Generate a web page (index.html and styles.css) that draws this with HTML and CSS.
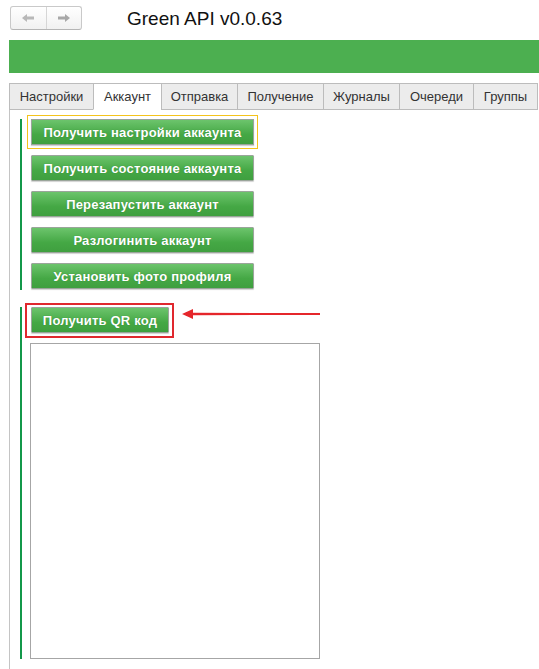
FILE: index.html
```html
<!DOCTYPE html>
<html lang="ru">
<head>
<meta charset="utf-8">
<title>Green API</title>
<link rel="stylesheet" href="styles.css">
</head>
<body>
<div class="top">
  <div class="nav">
    <span class="nav-btn">
      <svg width="14" height="10" viewBox="0 0 14 10"><path d="M1 5 L6 1 L6 3.5 L13 3.5 L13 6.5 L6 6.5 L6 9 Z" fill="#b8b8b8"/></svg>
    </span>
    <span class="nav-btn">
      <svg width="14" height="10" viewBox="0 0 14 10"><path d="M13 5 L8 1 L8 3.5 L1 3.5 L1 6.5 L8 6.5 L8 9 Z" fill="#a8a8a8"/></svg>
    </span>
  </div>
  <div class="title">Green API v0.0.63</div>
</div>
<div class="banner"></div>
<div class="tabs">
  <div class="tab t1">Настройки</div>
  <div class="tab t2 active">Аккаунт</div>
  <div class="tab t3">Отправка</div>
  <div class="tab t4">Получение</div>
  <div class="tab t5">Журналы</div>
  <div class="tab t6">Очереди</div>
  <div class="tab t7">Группы</div>
</div>
<div class="panel">
  <div class="group g1">
    <button class="btn focused">Получить настройки аккаунта</button>
    <button class="btn">Получить состояние аккаунта</button>
    <button class="btn">Перезапустить аккаунт</button>
    <button class="btn">Разлогинить аккаунт</button>
    <button class="btn">Установить фото профиля</button>
  </div>
  <div class="group g2">
    <div class="qr-row">
      <button class="btn qr">Получить QR код</button>
      <div class="mark"></div>
      <svg class="arrow" width="140" height="12" viewBox="0 0 140 12">
        <path d="M0 6 L11 1 L11 4.8 L138 5 L138 7 L11 7.2 L11 11 Z" fill="#e5262b"/>
      </svg>
    </div>
    <div class="qr-box"></div>
  </div>
</div>
</body>
</html>
```

FILE: styles.css
```css
html, body {
  margin: 0;
  padding: 0;
  background: #fff;
  font-family: "Liberation Sans", Arial, sans-serif;
  color: #333;
}

.top {
  display: flex;
  align-items: flex-start;
  padding-top: 6px;
  height: 34px;
  box-sizing: border-box;
}

.nav {
  margin-left: 10px;
  width: 72px;
  height: 24px;
  box-sizing: border-box;
  border: 1px solid #c9c9c9;
  border-bottom-color: #b5b5b5;
  border-radius: 3px;
  background: linear-gradient(#ffffff, #f1f1f1);
  display: flex;
}

.nav-btn {
  flex: 1;
  display: flex;
  align-items: center;
  justify-content: center;
}

.nav-btn + .nav-btn {
  border-left: 1px solid #d6d6d6;
}

.title {
  margin-left: 45px;
  font-size: 19px;
  line-height: 24px;
  margin-top: 1px;
  color: #111;
}

.banner {
  margin-left: 9px;
  margin-top: 6px;
  height: 33px;
  background: #4caf50;
}

.tabs {
  display: flex;
  margin-left: 9px;
  margin-top: 10px;
  height: 27px;
}

.tab {
  box-sizing: border-box;
  height: 27px;
  border: 1px solid #bcbcbc;
  border-right: none;
  background: #ececec;
  font-size: 13px;
  line-height: 25px;
  text-align: center;
  color: #333;
}

.tab.t7 { border-right: 1px solid #bcbcbc; }
.tab.active { background: #fff; border-bottom-color: #fff; }
.t1 { width: 84px; }
.t2 { width: 68px; }
.t3 { width: 76px; }
.t4 { width: 86px; }
.t5 { width: 76px; }
.t6 { width: 74px; }
.t7 { width: 65px; }

.panel {
  margin-left: 9px;
  border-left: 1px solid #c4c4c4;
  height: 559px;
  padding-top: 9px;
  box-sizing: border-box;
}

.group {
  margin-left: 10px;
  border-left: 2px solid #13984a;
}

.g1 {
  display: flex;
  flex-direction: column;
  align-items: flex-start;
  gap: 10px;
  padding-left: 9px;
  padding-bottom: 1px;
}

.btn {
  box-sizing: border-box;
  width: 223px;
  height: 26px;
  padding: 0;
  border: 1px solid #9aa59a;
  border-radius: 1px;
  background: linear-gradient(#6cc46c, #45a845 60%, #3f9f3f);
  box-shadow: 0 1px 1px rgba(0, 0, 0, 0.18);
  color: #fff;
  font-family: "Liberation Sans", Arial, sans-serif;
  font-weight: bold;
  font-size: 13px;
  letter-spacing: 0.2px;
  text-shadow: 0 0 1px rgba(0, 60, 0, 0.35);
  cursor: pointer;
}

.btn.focused {
  outline: 1px solid #f4c31c;
  outline-offset: 3px;
  border-radius: 0;
}

.g2 {
  margin-top: 17px;
  padding-top: 0;
  height: 352px;
  box-sizing: border-box;
}

.qr-row {
  position: relative;
  padding-left: 9px;
  height: 26px;
}

.btn.qr {
  width: 138px;
}

.mark {
  position: absolute;
  left: 3px;
  top: -4px;
  width: 149px;
  height: 35px;
  box-sizing: border-box;
  border: 2px solid #e0282e;
}

.arrow {
  position: absolute;
  left: 160px;
  top: 1px;
}

.qr-box {
  margin-top: 10px;
  margin-left: 8px;
  width: 290px;
  height: 316px;
  box-sizing: border-box;
  border: 1px solid #a6a6a6;
}
```
